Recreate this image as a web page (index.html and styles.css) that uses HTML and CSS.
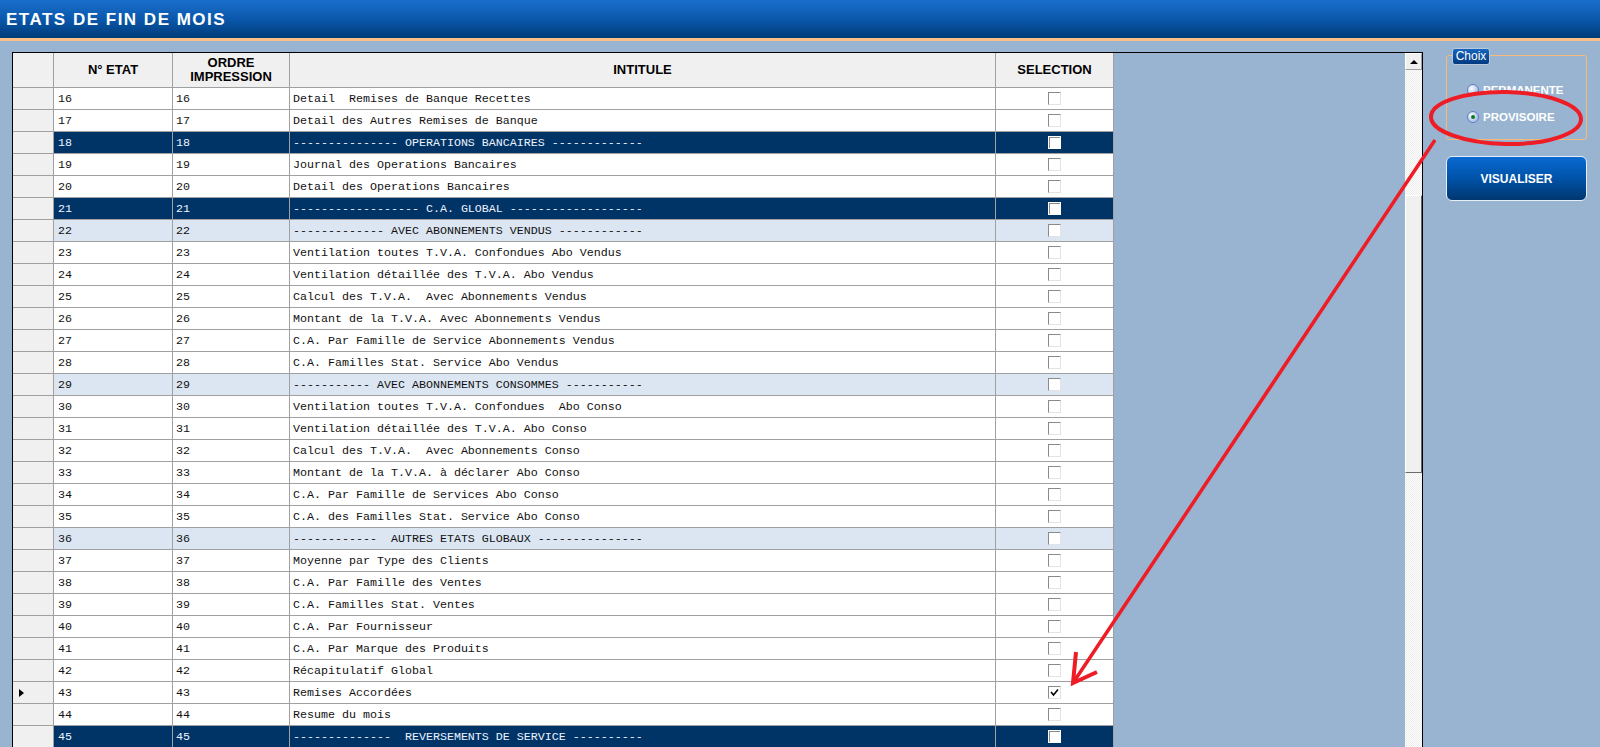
FILE: index.html
```html
<!DOCTYPE html>
<html lang="fr">
<head>
    <meta charset="UTF-8">
    <title>Etats de fin de mois</title>
    <link rel="stylesheet" href="styles.css">
</head>
<body>
    <div class="titlebar">ETATS DE FIN DE MOIS</div>

    <div class="main">
        <div class="grid">
            <table class="cells">
                <thead>
                    <tr>
                        <th class="rh"></th>
                        <th class="c-etat">N° ETAT</th>
                        <th class="c-ordre">ORDRE<br>IMPRESSION</th>
                        <th class="c-lib">INTITULE</th>
                        <th class="c-sel">SELECTION</th>
                    </tr>
                </thead>
                <tbody>
                    <tr><td class="rh"></td><td>16</td><td>16</td><td class="lib">Detail  Remises de Banque Recettes</td><td><span class="cb"></span></td></tr>
                    <tr><td class="rh"></td><td>17</td><td>17</td><td class="lib">Detail des Autres Remises de Banque</td><td><span class="cb"></span></td></tr>
                    <tr class="dark"><td class="rh"></td><td>18</td><td>18</td><td class="lib">--------------- OPERATIONS BANCAIRES -------------</td><td><span class="cb"></span></td></tr>
                    <tr><td class="rh"></td><td>19</td><td>19</td><td class="lib">Journal des Operations Bancaires</td><td><span class="cb"></span></td></tr>
                    <tr><td class="rh"></td><td>20</td><td>20</td><td class="lib">Detail des Operations Bancaires</td><td><span class="cb"></span></td></tr>
                    <tr class="dark"><td class="rh"></td><td>21</td><td>21</td><td class="lib">------------------ C.A. GLOBAL -------------------</td><td><span class="cb"></span></td></tr>
                    <tr class="light"><td class="rh"></td><td>22</td><td>22</td><td class="lib">------------- AVEC ABONNEMENTS VENDUS ------------</td><td><span class="cb"></span></td></tr>
                    <tr><td class="rh"></td><td>23</td><td>23</td><td class="lib">Ventilation toutes T.V.A. Confondues Abo Vendus</td><td><span class="cb"></span></td></tr>
                    <tr><td class="rh"></td><td>24</td><td>24</td><td class="lib">Ventilation détaillée des T.V.A. Abo Vendus</td><td><span class="cb"></span></td></tr>
                    <tr><td class="rh"></td><td>25</td><td>25</td><td class="lib">Calcul des T.V.A.  Avec Abonnements Vendus</td><td><span class="cb"></span></td></tr>
                    <tr><td class="rh"></td><td>26</td><td>26</td><td class="lib">Montant de la T.V.A. Avec Abonnements Vendus</td><td><span class="cb"></span></td></tr>
                    <tr><td class="rh"></td><td>27</td><td>27</td><td class="lib">C.A. Par Famille de Service Abonnements Vendus</td><td><span class="cb"></span></td></tr>
                    <tr><td class="rh"></td><td>28</td><td>28</td><td class="lib">C.A. Familles Stat. Service Abo Vendus</td><td><span class="cb"></span></td></tr>
                    <tr class="light"><td class="rh"></td><td>29</td><td>29</td><td class="lib">----------- AVEC ABONNEMENTS CONSOMMES -----------</td><td><span class="cb"></span></td></tr>
                    <tr><td class="rh"></td><td>30</td><td>30</td><td class="lib">Ventilation toutes T.V.A. Confondues  Abo Conso</td><td><span class="cb"></span></td></tr>
                    <tr><td class="rh"></td><td>31</td><td>31</td><td class="lib">Ventilation détaillée des T.V.A. Abo Conso</td><td><span class="cb"></span></td></tr>
                    <tr><td class="rh"></td><td>32</td><td>32</td><td class="lib">Calcul des T.V.A.  Avec Abonnements Conso</td><td><span class="cb"></span></td></tr>
                    <tr><td class="rh"></td><td>33</td><td>33</td><td class="lib">Montant de la T.V.A. à déclarer Abo Conso</td><td><span class="cb"></span></td></tr>
                    <tr><td class="rh"></td><td>34</td><td>34</td><td class="lib">C.A. Par Famille de Services Abo Conso</td><td><span class="cb"></span></td></tr>
                    <tr><td class="rh"></td><td>35</td><td>35</td><td class="lib">C.A. des Familles Stat. Service Abo Conso</td><td><span class="cb"></span></td></tr>
                    <tr class="light"><td class="rh"></td><td>36</td><td>36</td><td class="lib">------------  AUTRES ETATS GLOBAUX ---------------</td><td><span class="cb"></span></td></tr>
                    <tr><td class="rh"></td><td>37</td><td>37</td><td class="lib">Moyenne par Type des Clients</td><td><span class="cb"></span></td></tr>
                    <tr><td class="rh"></td><td>38</td><td>38</td><td class="lib">C.A. Par Famille des Ventes</td><td><span class="cb"></span></td></tr>
                    <tr><td class="rh"></td><td>39</td><td>39</td><td class="lib">C.A. Familles Stat. Ventes</td><td><span class="cb"></span></td></tr>
                    <tr><td class="rh"></td><td>40</td><td>40</td><td class="lib">C.A. Par Fournisseur</td><td><span class="cb"></span></td></tr>
                    <tr><td class="rh"></td><td>41</td><td>41</td><td class="lib">C.A. Par Marque des Produits</td><td><span class="cb"></span></td></tr>
                    <tr><td class="rh"></td><td>42</td><td>42</td><td class="lib">Récapitulatif Global</td><td><span class="cb"></span></td></tr>
                    <tr><td class="rh"><span class="cur"></span></td><td>43</td><td>43</td><td class="lib">Remises Accordées</td><td><span class="cb checked"><svg width="9" height="9" viewBox="0 0 9 9"><polyline points="1,4 3.5,7 8,1.5" fill="none" stroke="#000" stroke-width="1.6"/></svg></span></td></tr>
                    <tr><td class="rh"></td><td>44</td><td>44</td><td class="lib">Resume du mois</td><td><span class="cb"></span></td></tr>
                    <tr class="dark"><td class="rh"></td><td>45</td><td>45</td><td class="lib">--------------  REVERSEMENTS DE SERVICE ----------</td><td><span class="cb"></span></td></tr>
                </tbody>
            </table>
            <div class="filler"></div>
            <div class="vscroll">
                <div class="sb-btn"><span class="arrow-up"></span></div>
                <div class="sb-thumb"></div>
            </div>
        </div>

        <div class="side">
            <div class="choix">
                <div class="legend">Choix</div>
                <div class="opt"><span class="radio"></span>PERMANENTE</div>
                <div class="opt"><span class="radio on"></span>PROVISOIRE</div>
            </div>
            <div class="btn">VISUALISER</div>
        </div>
    </div>

    <!-- red hand-drawn annotation over the screenshot -->
    <svg class="annot" width="1600" height="747" viewBox="0 0 1600 747">
        <ellipse cx="1506" cy="118" rx="75" ry="26" fill="none" stroke="#ee1c25" stroke-width="4" transform="rotate(1 1506 118)"/>
        <line x1="1435" y1="140" x2="1073" y2="683" stroke="#ee1c25" stroke-width="3.5"/>
        <polyline points="1076,652 1073,683 1097,672" fill="none" stroke="#ee1c25" stroke-width="4"/>
    </svg>
</body>
</html>
```

FILE: styles.css
```css
body {
    margin: 0;
    height: 747px;
    overflow: hidden;
    background: #99b4d1;
    font-family: "Liberation Sans", Arial, sans-serif;
    position: relative;
}
.titlebar {
    height: 36px;
    padding: 2px 0 0 6px;
    line-height: 36px;
    border-bottom: 3px solid #fcc084;
    background: linear-gradient(#1a6fcc, #0a58ac 50%, #003b78);
    color: #fff;
    font-size: 17px;
    font-weight: bold;
    letter-spacing: 1.5px;
}
.main {
    display: flex;
    align-items: flex-start;
    padding: 11px 0 0 12px;
}

/* data grid */
.grid {
    display: flex;
    width: 1409px;
    height: 720px;
    border: 1px solid #000;
    background: #99b4d1;
}
.cells {
    border-collapse: separate;
    border-spacing: 0;
    table-layout: fixed;
    width: 1101px;
    align-self: flex-start;
    font-family: "Liberation Mono", "Courier New", monospace;
    font-size: 11.67px;
    color: #111;
}
.cells th,
.cells td {
    box-sizing: border-box;
    border-right: 1px solid #a0a0a0;
    border-bottom: 1px solid #a0a0a0;
    padding: 0 3px;
    background: #fff;
    white-space: pre;
    overflow: hidden;
    vertical-align: middle;
}
.cells thead tr {
    height: 35px;
}
.cells tbody tr {
    height: 22px;
}
.cells th {
    background: #f0f0f0;
    font-family: "Liberation Sans", Arial, sans-serif;
    font-size: 13px;
    line-height: 14px;
    color: #000;
    text-align: center;
    white-space: normal;
}
.cells .rh {
    width: 41px;
    background: #f0f0f0;
    padding-left: 6px;
}
.c-etat { width: 119px; }
.c-ordre { width: 117px; }
.c-lib { width: 706px; }
.c-sel { width: 118px; }
.cells td:nth-child(2) {
    padding-left: 4px;
}
.cells tr.dark td:not(.rh) {
    background: #003366;
    color: #eef3ff;
}
.cells tr.light td:not(.rh) {
    background: #dce6f2;
}
.cur {
    display: block;
    width: 0;
    height: 0;
    border-left: 5px solid #000;
    border-top: 4px solid transparent;
    border-bottom: 4px solid transparent;
}
.cb {
    display: block;
    box-sizing: border-box;
    width: 13px;
    height: 13px;
    margin: 0 auto;
    border: 1px solid;
    border-color: #8a8a8a #e3e3e3 #e3e3e3 #8a8a8a;
    background: #fff;
}
.cb svg {
    display: block;
    margin: 1px 0 0 1px;
}
tr.dark .cb {
    border: 1px solid #fff;
    box-shadow: inset 1px 1px 0 #8a8a8a;
}
.filler {
    flex: 1;
}
.vscroll {
    width: 17px;
    background: repeating-conic-gradient(#ffffff 0 25%, #ececec 0 50%) 0 0 / 2px 2px;
}
.sb-btn {
    box-sizing: border-box;
    height: 17px;
    background: #f0f0f0;
    border: 1px solid;
    border-color: #fff #a0a0a0 #a0a0a0 #fff;
    display: flex;
    align-items: center;
    justify-content: center;
}
.arrow-up {
    width: 0;
    height: 0;
    border-bottom: 4px solid #000;
    border-left: 4px solid transparent;
    border-right: 4px solid transparent;
}
.sb-thumb {
    box-sizing: border-box;
    margin-top: 125px;
    height: 278px;
    background: #f0f0f0;
    border: 1px solid;
    border-color: #fff #6a6a6a #6a6a6a #fff;
}

/* right panel */
.side {
    margin: 3px 0 0 23px;
}
.choix {
    position: relative;
    box-sizing: border-box;
    width: 141px;
    height: 85px;
    border: 1px solid #f9b979;
    border-radius: 3px;
    padding: 25px 0 0 20px;
    display: flex;
    flex-direction: column;
    gap: 9px;
}
.legend {
    position: absolute;
    left: 5px;
    top: -8px;
    box-sizing: border-box;
    width: 38px;
    height: 17px;
    line-height: 15px;
    text-align: center;
    font-size: 12px;
    color: #fff;
    background: linear-gradient(#1565c0, #003a80);
    border: 1px solid #b8c8dc;
    border-radius: 3px;
}
.opt {
    display: flex;
    align-items: center;
    gap: 4px;
    height: 18px;
    color: #fff;
    font-size: 11.5px;
    font-weight: bold;
}
.radio {
    position: relative;
    box-sizing: border-box;
    width: 12px;
    height: 12px;
    border-radius: 50%;
    border: 1px solid #5f80c0;
    background: radial-gradient(circle at 35% 35%, #ffffff, #b5c9ee 60%, #9db6e6);
}
.radio.on::after {
    content: "";
    position: absolute;
    left: 3px;
    top: 3px;
    width: 4px;
    height: 4px;
    border-radius: 50%;
    background: #0b7a1c;
}
.btn {
    box-sizing: border-box;
    margin-top: 16px;
    width: 141px;
    height: 45px;
    border: 1px solid #e6eef7;
    border-radius: 6px;
    background: linear-gradient(#0a6ad2, #0052a8 50%, #00376f);
    color: #fff;
    font-size: 12px;
    font-weight: bold;
    display: flex;
    align-items: center;
    justify-content: center;
}
.annot {
    position: absolute;
    left: 0;
    top: 0;
    pointer-events: none;
}
```
